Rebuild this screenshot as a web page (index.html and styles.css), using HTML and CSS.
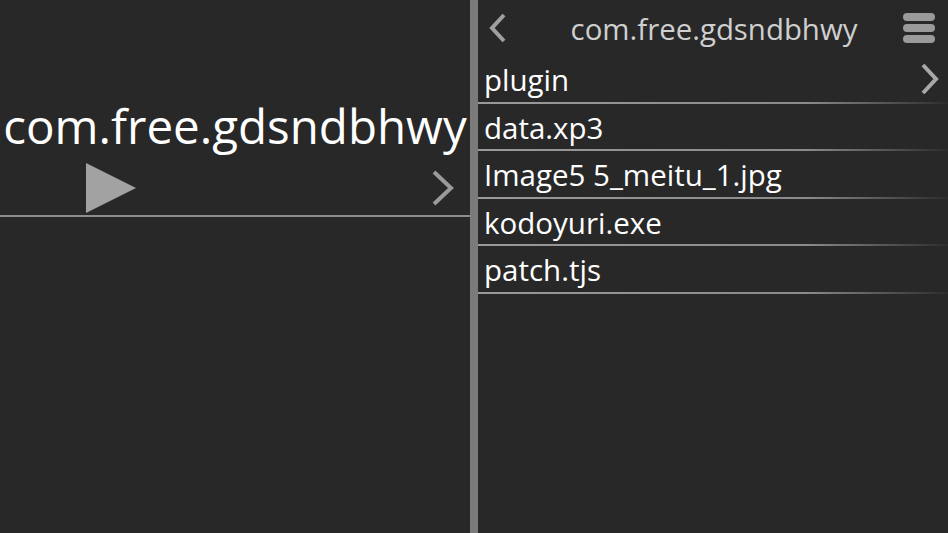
FILE: index.html
```html
<!DOCTYPE html>
<html>
<head>
<meta charset="utf-8">
<link rel="stylesheet" href="styles.css">
</head>
<body>
<div class="app">
  <section class="left">
    <div class="left-title">com.free.gdsndbhwy</div>
    <div class="left-controls">
      <svg class="play" width="50" height="50" viewBox="0 0 50 50"><polygon points="0,0 50,25 0,50" fill="#a2a2a2"/></svg>
      <svg class="chev-left" width="24" height="38" viewBox="0 0 24 38"><polyline points="3,3 20,19 3,35" fill="none" stroke="#9a9a9a" stroke-width="4"/></svg>
    </div>
    <div class="left-line"></div>
  </section>
  <div class="divider"></div>
  <section class="right">
    <header class="header">
      <svg class="back" width="20" height="30" viewBox="0 0 20 30"><polyline points="16,2 4,15 16,28" fill="none" stroke="#a0a0a0" stroke-width="4"/></svg>
      <div class="header-title">com.free.gdsndbhwy</div>
      <svg class="menu" width="34" height="32" viewBox="0 0 34 32"><rect x="1" y="1" width="32" height="8" rx="4" fill="#9a9a9a"/><rect x="1" y="12" width="32" height="8" rx="4" fill="#9a9a9a"/><rect x="1" y="23" width="32" height="8" rx="4" fill="#9a9a9a"/></svg>
    </header>
    <ul class="list">
      <li class="row"><span>plugin</span><svg class="row-chev" width="20" height="32" viewBox="0 0 20 32"><polyline points="3,2 16,16 3,30" fill="none" stroke="#a8a8a8" stroke-width="4"/></svg></li>
      <li class="row"><span>data.xp3</span></li>
      <li class="row"><span>Image5 5_meitu_1.jpg</span></li>
      <li class="row"><span>kodoyuri.exe</span></li>
      <li class="row"><span>patch.tjs</span></li>
    </ul>
  </section>
</div>
</body>
</html>
```
FILE: styles.css
```css
html, body { margin: 0; padding: 0; }
body {
  background: #282828;
  font-family: "Open Sans", "DejaVu Sans", sans-serif;
  width: 948px;
  height: 533px;
  overflow: hidden;
}
.app { display: flex; height: 533px; }
.left { width: 470px; display: flex; flex-direction: column; }
.left-title {
  color: #fff;
  font-size: 47.5px;
  text-align: center;
  line-height: 50px;
  margin-top: 101px;
  white-space: nowrap;
}
.left-controls {
  display: flex;
  align-items: center;
  justify-content: space-between;
  height: 55px;
  padding: 9px 15px 0 86px;
  margin-bottom: 0;
}
.left-line { height: 2px; background: #8c8c8c; }
.divider { width: 8px; background: #7b7b7b; }
.right { flex: 1; display: flex; flex-direction: column; }
.header {
  height: 56px;
  display: grid;
  grid-template-columns: 1fr auto 1fr;
  align-items: center;
  padding: 0 12px 0 10px;
}
.back { justify-self: start; }
.menu { justify-self: end; }
.header-title {
  color: #cfcfcf;
  font-size: 29.4px;
  white-space: nowrap;
  padding: 1px 0 0 4px;
}
.list { list-style: none; margin: 0; padding: 0; }
.row {
  height: 45.5px;
  display: flex;
  align-items: center;
  justify-content: space-between;
  padding: 0 8px 0 6px;
  color: #fff;
  font-size: 29.5px;
  border-bottom: 2px solid transparent;
  border-image: linear-gradient(to right, #9a9a9a 0%, #8a8a8a 70%, #2c2c2c 100%) 1;
}
.row span { padding-top: 2px; }
```
